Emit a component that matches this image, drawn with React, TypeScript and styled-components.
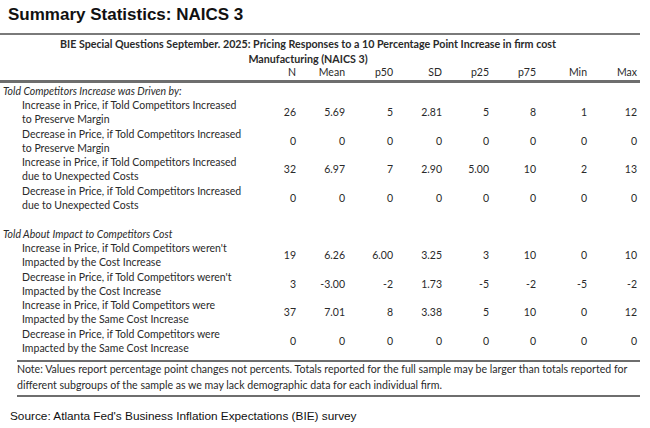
import React from 'react';
import styled, { createGlobalStyle } from 'styled-components';

type Row = { label: [string, string]; values: string[] };

const columns = ['N', 'Mean', 'p50', 'SD', 'p25', 'p75', 'Min', 'Max'];

const sections: { title: string; rows: Row[] }[] = [
  {
    title: 'Told Competitors Increase was Driven by:',
    rows: [
      {
        label: ['Increase in Price, if Told Competitors Increased', 'to Preserve Margin'],
        values: ['26', '5.69', '5', '2.81', '5', '8', '1', '12']
      },
      {
        label: ['Decrease in Price, if Told Competitors Increased', 'to Preserve Margin'],
        values: ['0', '0', '0', '0', '0', '0', '0', '0']
      },
      {
        label: ['Increase in Price, if Told Competitors Increased', 'due to Unexpected Costs'],
        values: ['32', '6.97', '7', '2.90', '5.00', '10', '2', '13']
      },
      {
        label: ['Decrease in Price, if Told Competitors Increased', 'due to Unexpected Costs'],
        values: ['0', '0', '0', '0', '0', '0', '0', '0']
      }
    ]
  },
  {
    title: 'Told About Impact to Competitors Cost',
    rows: [
      {
        label: ["Increase in Price, if Told Competitors weren't", 'Impacted by the Cost Increase'],
        values: ['19', '6.26', '6.00', '3.25', '3', '10', '0', '10']
      },
      {
        label: ["Decrease in Price, if Told Competitors weren't", 'Impacted by the Cost Increase'],
        values: ['3', '-3.00', '-2', '1.73', '-5', '-2', '-5', '-2']
      },
      {
        label: ['Increase in Price, if Told Competitors were', 'Impacted by the Same Cost Increase'],
        values: ['37', '7.01', '8', '3.38', '5', '10', '0', '12']
      },
      {
        label: ['Decrease in Price, if Told Competitors were', 'Impacted by the Same Cost Increase'],
        values: ['0', '0', '0', '0', '0', '0', '0', '0']
      }
    ]
  }
];

const GlobalStyle = createGlobalStyle`
  html, body {
    margin: 0;
    padding: 0;
    background: #ffffff;
  }
`;

const Page = styled.div`
  width: 650px;
  height: 428px;
  padding: 4px 0 0 0;
  box-sizing: border-box;
  background: #ffffff;
`;

const Title = styled.h1`
  margin: 0 0 0 8px;
  font: bold 17px 'Liberation Sans', Arial, sans-serif;
  line-height: 22px;
  color: #111;
`;

const Table = styled.div`
  width: 640px;
  margin-top: 7px;
  border-top: 2px solid #7a7a7a;
  font-family: Lato, 'Open Sans', sans-serif;
  font-size: 10.5px;
  color: #2a2a2a;
`;

const Caption = styled.div`
  text-align: center;
  font-weight: bold;
  font-size: 10.7px;
  line-height: 15px;
  padding: 1px 24px 0 0;
`;

const Grid = styled.div`
  display: grid;
  grid-template-columns: 246px 50px 49px 48px 49px 47px 47px 51px 50px;
  align-items: center;
`;

const HeaderRow = styled(Grid)`
  line-height: 13px;
  border-bottom: 3px solid #6e6e6e;
  padding-bottom: 1px;
`;

const HeadCell = styled.div`
  text-align: right;
`;

const SectionTitle = styled.div<{ $gap: number }>`
  font-style: italic;
  padding-left: 3px;
  margin-top: ${(p) => p.$gap}px;
  line-height: 14px;
`;

const DataRow = styled(Grid)`
  height: 28.5px;
`;

const Label = styled.div`
  padding-left: 22px;
  line-height: 14.25px;
`;

const Value = styled.div`
  text-align: right;
`;

const Note = styled.div`
  margin: 5px 0 0 17px;
  padding: 0 0 2px 0;
  border-top: 2px solid #6e6e6e;
  border-bottom: 2px solid #6e6e6e;
  line-height: 15.5px;
  font-size: 10.6px;
`;

const Source = styled.div`
  margin: 12px 0 0 10px;
  font: 11.8px 'Liberation Sans', Arial, sans-serif;
  color: #111;
`;

export default function App() {
  return (
    <Page>
      <GlobalStyle />
      <Title>Summary Statistics: NAICS 3</Title>
      <Table>
        <Caption>
          BIE Special Questions September. 2025: Pricing Responses to a 10 Percentage Point Increase in firm cost
          <br />
          Manufacturing (NAICS 3)
        </Caption>
        <HeaderRow>
          <div />
          {columns.map((c) => (
            <HeadCell key={c}>{c}</HeadCell>
          ))}
        </HeaderRow>
        {sections.map((s, i) => (
          <React.Fragment key={s.title}>
            <SectionTitle $gap={i === 0 ? 1 : 15}>{s.title}</SectionTitle>
            {s.rows.map((r) => (
              <DataRow key={r.label.join(' ')}>
                <Label>
                  {r.label[0]}
                  <br />
                  {r.label[1]}
                </Label>
                {r.values.map((v, j) => (
                  <Value key={j}>{v}</Value>
                ))}
              </DataRow>
            ))}
          </React.Fragment>
        ))}
        <Note>
          Note: Values report percentage point changes not percents. Totals reported for the full sample may be larger than totals reported for
          <br />
          different subgroups of the sample as we may lack demographic data for each individual firm.
        </Note>
      </Table>
      <Source>Source: Atlanta Fed's Business Inflation Expectations (BIE) survey</Source>
    </Page>
  );
}
